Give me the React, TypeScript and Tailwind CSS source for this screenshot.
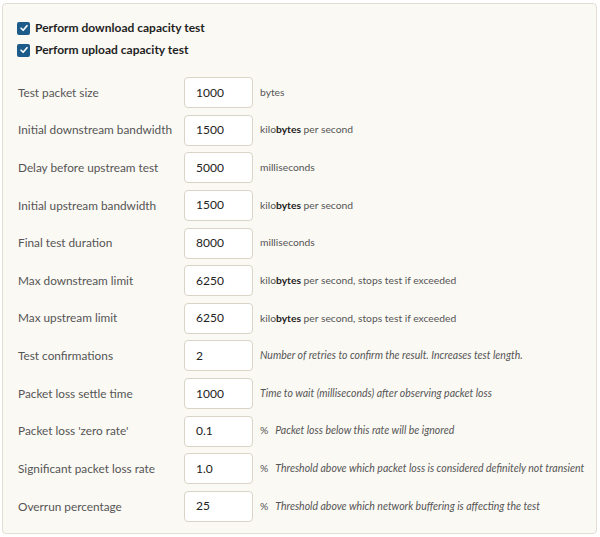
const FONT = "font-['Lato','Noto_Sans',sans-serif]";

type Row = { label: string; value: string; note: React.ReactNode };

const KBPS = (
  <span>
    kilo<b className="font-bold text-[#222]">bytes</b> per second
  </span>
);

const KBPS_LIMIT = (
  <span>
    kilo<b className="font-bold text-[#222]">bytes</b> per second, stops test if exceeded
  </span>
);

function Pct({ text }: { text: string }) {
  return (
    <span>
      %<span className="ml-[7px] italic text-[10.5px]">{text}</span>
    </span>
  );
}

const ROWS: Row[] = [
  { label: "Test packet size", value: "1000", note: "bytes" },
  { label: "Initial downstream bandwidth", value: "1500", note: KBPS },
  { label: "Delay before upstream test", value: "5000", note: "milliseconds" },
  { label: "Initial upstream bandwidth", value: "1500", note: KBPS },
  { label: "Final test duration", value: "8000", note: "milliseconds" },
  { label: "Max downstream limit", value: "6250", note: KBPS_LIMIT },
  { label: "Max upstream limit", value: "6250", note: KBPS_LIMIT },
  {
    label: "Test confirmations",
    value: "2",
    note: <span className="italic text-[10.5px]">Number of retries to confirm the result. Increases test length.</span>,
  },
  {
    label: "Packet loss settle time",
    value: "1000",
    note: <span className="italic text-[10.5px]">Time to wait (milliseconds) after observing packet loss</span>,
  },
  { label: "Packet loss 'zero rate'", value: "0.1", note: <Pct text="Packet loss below this rate will be ignored" /> },
  {
    label: "Significant packet loss rate",
    value: "1.0",
    note: <Pct text="Threshold above which packet loss is considered definitely not transient" />,
  },
  {
    label: "Overrun percentage",
    value: "25",
    note: <Pct text="Threshold above which network buffering is affecting the test" />,
  },
];

function Check({ label }: { label: string }) {
  return (
    <label className="flex items-center h-[22px]">
      <span className="w-[13px] h-[13px] rounded-[2px] bg-[#1d5b8a] flex items-center justify-center shrink-0">
        <svg viewBox="0 0 12 12" className="w-[10px] h-[10px]" fill="none" stroke="white" strokeWidth="2"
             strokeLinecap="round" strokeLinejoin="round">
          <path d="M2.5 6.3 L5 8.7 L9.6 3.3" />
        </svg>
      </span>
      <span className="ml-[5px] text-[12px] font-bold text-[#1f1f1f]">{label}</span>
    </label>
  );
}

export default function App() {
  return (
    <div className={`w-[600px] h-[537px] bg-white pt-[3px] pl-[2px] ${FONT}`}>
      <div className="w-[595px] h-[531px] bg-[#fbf9f4] border border-[#e2ded3] rounded-[4px] pl-[14px] pt-[13px]">
        <Check label="Perform download capacity test" />
        <Check label="Perform upload capacity test" />

        {/* settings rows: label column, value box, unit / hint */}
        <div className="mt-[16px] flex flex-col gap-[6.64px]">
          {ROWS.map((r) => (
            <div key={r.label} className="flex items-center h-[31px] whitespace-nowrap">
              <span className="w-[167px] shrink-0 pl-[1px] text-[11.8px] text-[#555]">{r.label}</span>
              <div className="w-[69px] h-[31px] shrink-0 bg-white border border-[#d9d4c5] rounded-[4px] flex items-center pl-[11px] text-[12px] text-[#222]">
                {r.value}
              </div>
              <span className="ml-[7px] text-[10.3px] text-[#555]">{r.note}</span>
            </div>
          ))}
        </div>
      </div>
    </div>
  );
}
